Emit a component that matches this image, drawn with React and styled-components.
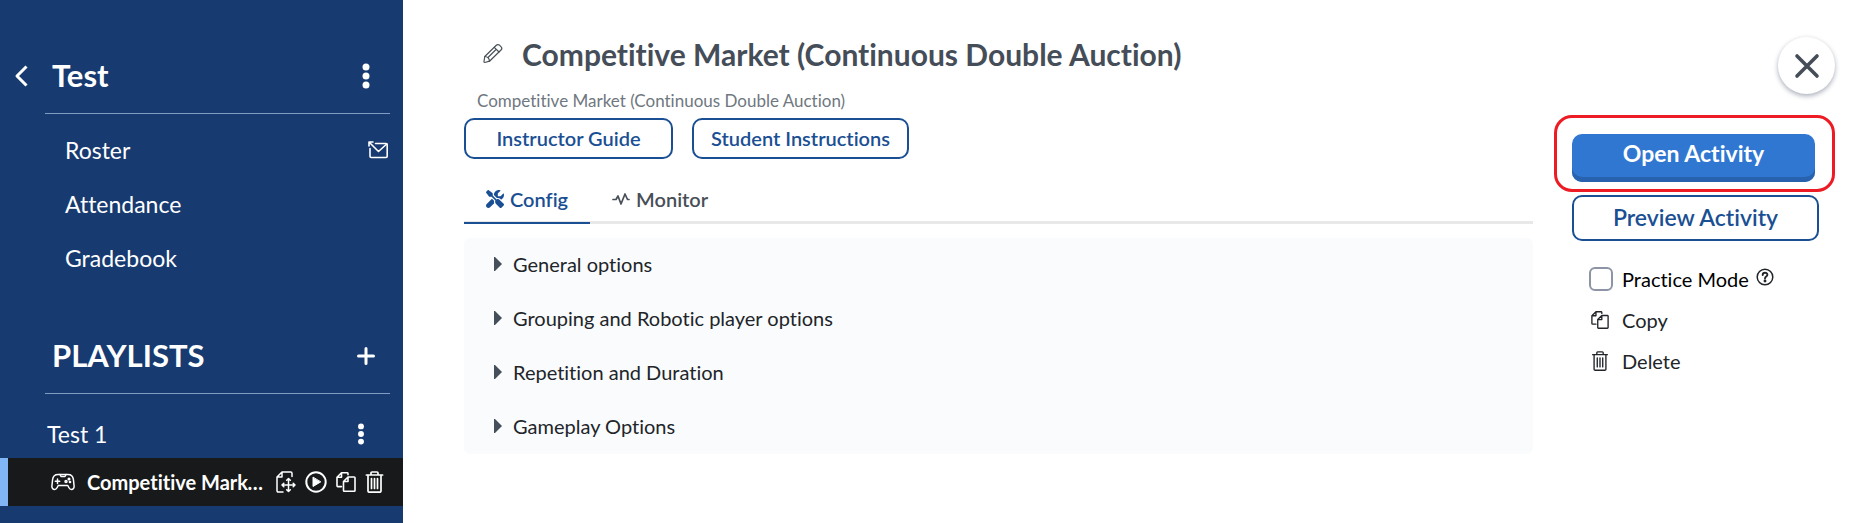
import React, { useState } from "react";
import styled, { createGlobalStyle } from "styled-components";

const GlobalStyle = createGlobalStyle`
  * {
    box-sizing: border-box;
  }
  body {
    margin: 0;
    background: #ffffff;
    font-family: Lato, "Liberation Sans", sans-serif;
    font-variant-ligatures: none;
  }
  button {
    font-family: inherit;
    font-variant-ligatures: inherit;
    cursor: pointer;
  }
`;

const Wrapper = styled.div`
  display: flex;
  min-height: 100vh;
`;

const Sidebar = styled.aside`
  flex: 0 0 403px;
  min-width: 0;
  background-color: #173a70;
  color: white;
`;
const SidebarHeader = styled.div`
  display: flex;
  align-items: center;
  height: 76px;
  margin: ${(props) => props.$top}px 13px 0 45px;
  padding: 0 ${(props) => props.$right}px 0 7px;
  border-bottom: 1px solid #7f9cc2;
`;
const BackButton = styled.button`
  display: flex;
  margin-left: -38px;
  margin-right: 24px;
  padding: 0;
  border: none;
  background: none;
  color: inherit;
`;
const SidebarTitle = styled.h2`
  flex: 1;
  margin: 0;
  padding-bottom: 2px;
  font-size: 31px;
  line-height: 36px;
  font-weight: bold;
`;
const IconButton = styled.button`
  display: flex;
  padding: 0;
  border: none;
  background: none;
  color: inherit;
`;
const Nav = styled.nav`
  padding: 9px 15px 0 65px;
`;
const NavRow = styled.div`
  display: flex;
  align-items: center;
  justify-content: space-between;
  height: 54px;
`;
const NavLink = styled.a`
  color: white;
  font-size: 23px;
  line-height: 28px;
  text-decoration: none;
`;
const PlaylistRow = styled.div`
  display: flex;
  align-items: center;
  justify-content: space-between;
  height: 48px;
  margin-top: 16px;
  padding: 0 38px 0 47px;
`;
const ActivityRow = styled.div`
  display: flex;
  align-items: center;
  height: 48px;
  padding: 0 19px 0 43px;
  border-left: 8px solid #80b6f6;
  background-color: #17191a;
`;
const ActivityName = styled.a`
  flex: 1;
  min-width: 0;
  margin: 0 8px 0 12px;
  overflow: hidden;
  color: white;
  font-size: 20px;
  line-height: 26px;
  font-weight: bold;
  text-decoration: none;
  text-overflow: ellipsis;
  white-space: nowrap;
`;
const ActivityActions = styled.div`
  display: flex;
  align-items: center;
  gap: 9px;
`;

const Content = styled.main`
  flex: 1;
  min-width: 0;
  padding: 24px 0 24px 61px;
`;
const TitleRow = styled.div`
  display: flex;
  align-items: center;
  gap: 18px;
  height: 60px;
  padding-left: 18px;
  color: #495057;
`;
const Title = styled.h1`
  margin: 0;
  color: #454d58;
  font-size: 30px;
  line-height: 36px;
  font-weight: bold;
`;
const SubTitle = styled.p`
  margin: 0;
  padding-left: 13px;
  color: #6f7780;
  font-size: 17px;
  line-height: 34px;
`;
const ButtonRow = styled.div`
  display: flex;
  gap: 19px;
`;
const OutlineButton = styled.button`
  width: ${(props) => props.$width}px;
  height: ${(props) => props.$height}px;
  padding: 0 0 2px;
  border: 2px solid #1b4f93;
  border-radius: 10px;
  background: white;
  color: #1b4f93;
  font-size: ${(props) => props.$size}px;
  font-weight: 600;
`;
const TabList = styled.div`
  display: flex;
  margin-top: 17px;
  box-shadow: inset 0 -3px 0 #e8e8e8;
`;
const Tab = styled.button`
  display: flex;
  align-items: center;
  gap: 6px;
  height: 48px;
  padding: 0 22px;
  border: none;
  border-bottom: 2px solid ${(props) => (props.$active ? "#1b4f93" : "transparent")};
  background: none;
  color: ${(props) => (props.$active ? "#1b4f93" : "#484f57")};
  font-size: 20px;
  font-weight: 600;
`;
const Panel = styled.div`
  margin-top: 14px;
  border-radius: 6px;
  background-color: #fafbfd;
`;
const OptionButton = styled.button`
  display: flex;
  align-items: center;
  gap: 11px;
  width: 100%;
  height: 54px;
  padding: 0 30px 2px;
  border: none;
  background: none;
  color: #212529;
  font-size: 20px;
`;

const Side = styled.aside`
  flex: 0 0 300px;
  display: flex;
  flex-direction: column;
  margin-left: 21px;
  padding: 37px 19px 0 0;
`;
const CloseButton = styled.button`
  display: flex;
  align-items: center;
  justify-content: center;
  align-self: flex-end;
  width: 57px;
  height: 57px;
  padding: 0;
  border: none;
  border-radius: 50%;
  background: white;
  color: #454d58;
  box-shadow: 0 2px 5px rgba(40, 50, 80, 0.4);
`;
const Highlight = styled.div`
  margin-top: 21px;
  padding: 16px 17px 7px 15px;
  border: 3px solid #ed1c24;
  border-radius: 18px;
`;
const PrimaryButton = styled.button`
  display: block;
  width: 100%;
  height: 48px;
  padding: 0 0 10px;
  border: none;
  border-radius: 10px;
  background-color: #2f77d1;
  box-shadow: inset 0 -5px 0 #2862ae;
  color: white;
  font-size: 23px;
  font-weight: bold;
`;
const SideBody = styled.div`
  padding: 3px 0 0 18px;
`;
const ActionList = styled.div`
  margin-top: 17px;
  padding-left: 17px;
`;
const ActionRow = styled.div`
  display: flex;
  align-items: center;
  height: 41px;
  color: #212529;
  font-size: 20px;
`;
const ActionButton = styled.button`
  display: flex;
  align-items: center;
  gap: 13px;
  padding: 0 0 0 2px;
  border: none;
  background: none;
  color: inherit;
  font-size: 20px;
`;
const Checkbox = styled.input`
  appearance: none;
  width: 24px;
  height: 24px;
  margin: 0 9px 0 0;
  border: 2px solid #8c94a5;
  border-radius: 6px;
  background: ${(props) => (props.checked ? "#2f77d1" : "white")};
`;
const Label = styled.label`
  margin-right: 7px;
  color: black;
`;

const Svg = ({ w = 20, h = w, box = "0 0 20 20", sw = 1.5, children }) => (
  <svg
    width={w}
    height={h}
    viewBox={box}
    fill="none"
    stroke="currentColor"
    strokeWidth={sw}
    strokeLinecap="round"
    strokeLinejoin="round"
    aria-hidden="true"
  >
    {children}
  </svg>
);

const DotsIcon = ({ h }) => (
  <Svg w={8} h={h} box="0 0 8 26">
    <g fill="currentColor" stroke="none">
      <circle cx="4" cy="4" r="3.5" />
      <circle cx="4" cy="13" r="3.5" />
      <circle cx="4" cy="22" r="3.5" />
    </g>
  </Svg>
);
const InviteIcon = () => (
  <Svg w={20} h={18} box="0 0 20 18" sw={1.6}>
    <path d="M7.500 2.500h10.500a1.200 1.200 0 0 1 1.200 1.200v11.600a1.200 1.200 0 0 1-1.200 1.200H3.200A1.200 1.200 0 0 1 2 15.300V7.500" />
    <path d="M1 5V1h4M1 1l9.500 9.500L18.700 3" />
  </Svg>
);
const GamepadIcon = () => (
  <Svg w={24} h={18} box="0 0 24 18" sw={1.5}>
    <path d="M7 1.500h10c3.500 0 5 2 5.400 5l.7 6.500c.2 2-1 3.500-2.700 3.500-1.300 0-2-.8-2.600-2l-1-2H7.200l-1 2c-.6 1.200-1.300 2-2.600 2C1.900 16.500.7 15 .9 13l.7-6.500c.4-3 1.900-5 5.400-5z" />
    <path d="M9 1.500l1 2h4l1-2M6.500 6v4.400M4.300 8.200h4.400" />
    <circle cx="15" cy="8.500" r="1" />
    <circle cx="18" cy="6" r=".8" />
    <circle cx="19" cy="9" r=".6" />
  </Svg>
);
const MovePageIcon = () => (
  <Svg w={20} h={22} box="0 0 20 22" sw={1.5}>
    <path d="M16 5.500V2.200A1.200 1.200 0 0 0 14.800 1H6L1 6v13.800A1.200 1.200 0 0 0 2.200 21H7M6 1v5H1" />
    <path d="M12.500 7.500v13M6 14h13M10.700 9.300l1.800-1.800 1.800 1.800M10.700 18.700l1.800 1.800 1.800-1.800M7.800 12.200L6 14l1.800 1.800M17.200 12.200L19 14l-1.800 1.800" />
  </Svg>
);
const PlayIcon = () => (
  <Svg w={22} box="0 0 22 22" sw={2}>
    <circle cx="11" cy="11" r="9.700" />
    <path d="M8 6.500v9l7.500-4.500z" fill="currentColor" strokeWidth="1" />
  </Svg>
);
const CopyIcon = ({ w = 20, sw = 1.6 }) => (
  <Svg w={w} h={w} sw={sw}>
    <path d="M12 2.700V1.500A.8.800 0 0 0 11.200.8H5.500L1 5.300v8.500a.8.800 0 0 0 .8.800H5.500M5.500.800v4.500H1" />
    <path d="M12 5h6.200a.8.800 0 0 1 .8.800v12.600a.8.800 0 0 1-.8.800H8.300a.8.800 0 0 1-.8-.8V9.500zM12 5v4.500H7.500" />
  </Svg>
);
const TrashIcon = ({ w = 19, h = 22, sw = 1.7 }) => (
  <Svg w={w} h={h} box="0 0 18 22" sw={sw}>
    <path d="M.900 4h16.200M5.500 4V2A1 1 0 0 1 6.500 1h5a1 1 0 0 1 1 1v2M2.500 4v16A1.200 1.200 0 0 0 3.700 21.200h10.600a1.200 1.200 0 0 0 1.200-1.200V4M6 7.500v10M9 7.500v10M12 7.500v10" />
  </Svg>
);
const PencilIcon = () => (
  <Svg w={22} box="0 0 22 22" sw={1.2}>
    <path d="M2 18.500l.8-5L14.300 2.300c1-1 2.300-1 3.200-.1l1.600 1.600c.9.900.9 2.200-.1 3.200L7.500 18.200l-4.700 1.300c-.600.100-.9-.4-.8-1z" />
    <path d="M2.800 13.500c2.500.2 4.500 2 4.700 4.700M12.300 4.300l4.700 4.700M6.500 14l7.300-7.200" />
  </Svg>
);
const ToolsIcon = () => (
  <Svg w={18} box="0 0 512 512">
    <path
      fill="currentColor"
      stroke="none"
      d="M78.600 5C69.100-2.400 55.600-1.500 47 7L7 47c-8.500 8.500-9.400 22-2.100 31.600l80 104c4.500 5.900 11.600 9.400 19 9.400h54.100l109 109c-14.700 29-10 65.400 14.300 89.600l112 112c12.500 12.500 32.800 12.500 45.300 0l64-64c12.500-12.500 12.500-32.800 0-45.300l-112-112c-24.200-24.200-60.600-29-89.600-14.300l-109-109V104c0-7.500-3.500-14.500-9.400-19L78.600 5zM19.900 396.100C7.200 408.800 0 426.100 0 444.100 0 481.600 30.400 512 67.900 512c18 0 35.300-7.200 48-19.900L233.700 374.300c-7.800-20.900-9-43.600-3.600-65.100l-61.700-61.700L19.900 396.100zM512 144c0-10.500-1.100-20.700-3.200-30.500-2.400-11.200-16.100-14.100-24.200-6l-63.900 63.900c-3 3-7.100 4.700-11.300 4.700H352c-8.800 0-16-7.200-16-16v-57.500c0-4.200 1.700-8.300 4.700-11.300l63.900-63.900c8.100-8.100 5.200-21.800-6-24.200C388.700 1.100 378.500 0 368 0c-79.500 0-144 64.500-144 144v.8l85.300 85.300c36-9.100 75.800.5 104 28.700l15.700 15.700c49-23 83-72.800 83-130.500z"
    />
  </Svg>
);
const PulseIcon = () => (
  <Svg w={18} h={14} box="0 0 18 14" sw={1.7}>
    <path d="M1 7.500h3l2-3.500 3 8 4-10 2.500 5.500H17" />
  </Svg>
);
const HelpIcon = () => (
  <Svg w={18} h={22} box="0 0 18 22" sw={1.5}>
    <circle cx="9" cy="9" r="7.800" />
    <path d="M6.700 7c0-3 4.700-3 4.700-.2 0 1.800-2.400 1.800-2.400 3.700" strokeWidth="1.900" />
    <circle cx="9" cy="13" r=".7" fill="currentColor" />
  </Svg>
);
const CaretIcon = () => (
  <svg width="8" height="14" viewBox="0 0 8 14" aria-hidden="true">
    <path d="M0 0h1l7 7-7 7H0z" fill="#454f5b" />
  </svg>
);

const options = [
  "General options",
  "Grouping and Robotic player options",
  "Repetition and Duration",
  "Gameplay Options",
];

const App = () => {
  const [tab, setTab] = useState("config");
  const [practice, setPractice] = useState(false);

  return (
    <Wrapper>
      <GlobalStyle />
      <Sidebar>
        <SidebarHeader $top={38} $right={20}>
          <BackButton aria-label="Back">
            <Svg w={14} h={22} box="0 0 14 22" sw={3}>
              <path d="M12.500 1.500L3 11l9.500 9.500" strokeLinecap="butt" />
            </Svg>
          </BackButton>
          <SidebarTitle>Test</SidebarTitle>
          <IconButton aria-label="Class menu">
            <DotsIcon h={26} />
          </IconButton>
        </SidebarHeader>
        <Nav>
          <NavRow>
            <NavLink href="#roster">Roster</NavLink>
            <IconButton aria-label="Invite students">
              <InviteIcon />
            </IconButton>
          </NavRow>
          <NavRow>
            <NavLink href="#attendance">Attendance</NavLink>
          </NavRow>
          <NavRow>
            <NavLink href="#gradebook">Gradebook</NavLink>
          </NavRow>
        </Nav>
        <SidebarHeader $top={33} $right={15}>
          <SidebarTitle>PLAYLISTS</SidebarTitle>
          <IconButton aria-label="Add playlist">
            <Svg w={18} box="0 0 18 18" sw={3}>
              <path d="M9 1.500v15M1.500 9h15" />
            </Svg>
          </IconButton>
        </SidebarHeader>
        <PlaylistRow>
          <NavLink href="#test-1">Test 1</NavLink>
          <IconButton aria-label="Playlist menu">
            <DotsIcon h={22} />
          </IconButton>
        </PlaylistRow>
        <ActivityRow>
          <GamepadIcon />
          <ActivityName href="#activity">
            Competitive Market (Continuous Double Auction)
          </ActivityName>
          <ActivityActions>
            <IconButton aria-label="Move">
              <MovePageIcon />
            </IconButton>
            <IconButton aria-label="Open">
              <PlayIcon />
            </IconButton>
            <IconButton aria-label="Copy activity">
              <CopyIcon />
            </IconButton>
            <IconButton aria-label="Delete activity">
              <TrashIcon />
            </IconButton>
          </ActivityActions>
        </ActivityRow>
      </Sidebar>

      <Content>
        <TitleRow>
          <IconButton aria-label="Edit title">
            <PencilIcon />
          </IconButton>
          <Title>Competitive Market (Continuous Double Auction)</Title>
        </TitleRow>
        <SubTitle>Competitive Market (Continuous Double Auction)</SubTitle>
        <ButtonRow>
          <OutlineButton $width={209} $height={41} $size={20}>
            Instructor Guide
          </OutlineButton>
          <OutlineButton $width={217} $height={41} $size={20}>
            Student Instructions
          </OutlineButton>
        </ButtonRow>
        <TabList role="tablist">
          <Tab
            role="tab"
            aria-selected={tab === "config"}
            $active={tab === "config"}
            onClick={() => setTab("config")}
          >
            <ToolsIcon />
            Config
          </Tab>
          <Tab
            role="tab"
            aria-selected={tab === "monitor"}
            $active={tab === "monitor"}
            onClick={() => setTab("monitor")}
          >
            <PulseIcon />
            Monitor
          </Tab>
        </TabList>
        <Panel>
          {options.map((option) => (
            <OptionButton key={option}>
              <CaretIcon />
              {option}
            </OptionButton>
          ))}
        </Panel>
      </Content>

      <Side>
        <CloseButton aria-label="Close">
          <Svg w={26} box="0 0 26 26" sw={3.6}>
            <path d="M3 3l20 20M23 3L3 23" />
          </Svg>
        </CloseButton>
        <Highlight>
          <PrimaryButton>Open Activity</PrimaryButton>
        </Highlight>
        <SideBody>
          <OutlineButton $width={247} $height={46} $size={23}>
            Preview Activity
          </OutlineButton>
          <ActionList>
            <ActionRow>
              <Checkbox
                type="checkbox"
                id="practice"
                checked={practice}
                onChange={(e) => setPractice(e.target.checked)}
              />
              <Label htmlFor="practice">Practice Mode</Label>
              <IconButton aria-label="About practice mode">
                <HelpIcon />
              </IconButton>
            </ActionRow>
            <ActionRow>
              <ActionButton>
                <CopyIcon w={18} sw={1.5} />
                Copy
              </ActionButton>
            </ActionRow>
            <ActionRow>
              <ActionButton>
                <TrashIcon w={18} h={20} sw={1.5} />
                Delete
              </ActionButton>
            </ActionRow>
          </ActionList>
        </SideBody>
      </Side>
    </Wrapper>
  );
};

export default App;
